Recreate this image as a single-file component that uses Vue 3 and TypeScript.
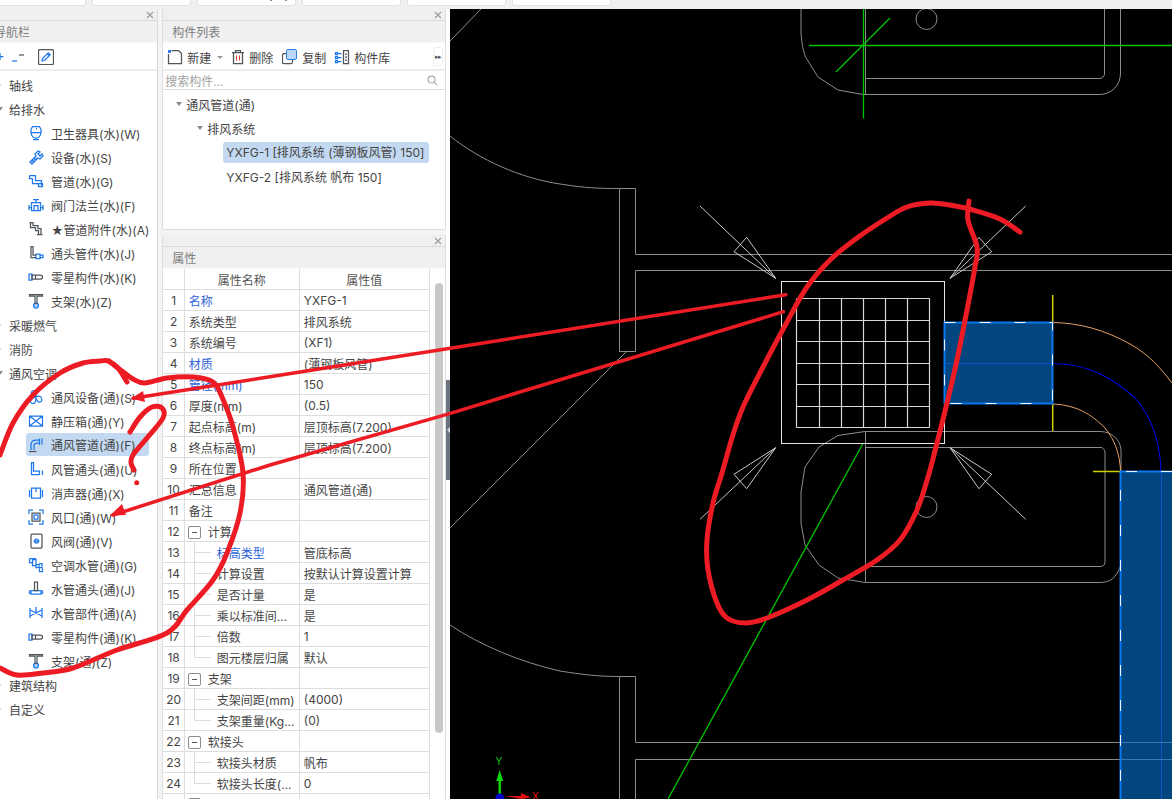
<script setup lang="ts">
type Pt = [number, number]

function smooth(p: Pt[]): string {
  let d = `M${p[0][0]} ${p[0][1]}`
  for (let i = 0; i < p.length - 1; i++) {
    const a = p[Math.max(i - 1, 0)]
    const b = p[i]
    const c = p[i + 1]
    const e = p[Math.min(i + 2, p.length - 1)]
    const c1x = b[0] + (c[0] - a[0]) / 6
    const c1y = b[1] + (c[1] - a[1]) / 6
    const c2x = c[0] - (e[0] - b[0]) / 6
    const c2y = c[1] - (e[1] - b[1]) / 6
    d += ` C${c1x.toFixed(1)} ${c1y.toFixed(1)} ${c2x.toFixed(1)} ${c2y.toFixed(1)} ${c[0]} ${c[1]}`
  }
  return d
}

const bigLoop = smooth([
  [1020, 232], [1000, 219], [973, 210], [950, 205], [930, 203], [907, 207], [887, 218], [857, 238],
  [830, 260], [807, 287], [787, 322], [763, 367], [743, 407], [732, 438], [722, 473], [713, 503],
  [707, 540], [708, 570], [717, 603], [727, 618], [745, 623], [767, 618], [807, 600], [843, 580],
  [877, 560], [900, 540], [917, 510], [928, 477], [936, 447], [947, 403], [957, 360], [967, 310],
  [975, 267], [977, 247], [968, 220], [969, 201]
])
const leftLoop = smooth([
  [0, 455], [13, 423], [33, 395], [60, 373], [83, 363], [100, 361], [108, 361], [118, 368], [127, 382]
])
const leftLoop2 = smooth([
  [109, 361], [122, 371], [133, 379], [145, 383], [167, 378], [193, 377], [213, 382], [222, 397],
  [233, 427], [243, 473], [240, 513], [227, 553], [213, 580], [187, 610], [167, 633], [117, 650],
  [73, 668], [43, 673], [17, 675], [0, 668]
])
const question = smooth([
  [130, 432], [140, 417], [152, 407], [162, 408], [163, 418], [147, 438], [133, 455], [131, 463], [134, 470]
])

const diffusers: { line: string; kite: string }[] = [
  { line: '700,206 775.7,278.3', kite: '775.7,278.3 734,251.7 746.7,237.3' },
  { line: '1025.7,206 950,278.3', kite: '950,278.3 991.7,251.7 979,237.3' },
  { line: '700,519.3 775.7,447.7', kite: '775.7,447.7 734,474.3 746.7,488.7' },
  { line: '1025.7,519.3 950,447.7', kite: '950,447.7 991.7,474.3 979,488.7' }
]
const gridX = [796.5, 819.5, 841.5, 863.5, 885.5, 907.5, 929.5]
const gridY = [298.5, 320.5, 341.5, 363.5, 384.5, 406.5, 427.5]

interface Node {
  label: string
  kind: 'open' | 'closed' | 'leaf'
  blue?: string
  dark?: string
  fill?: string
  active?: boolean
}

const nav: Node[] = [
  { label: '轴线', kind: 'closed' },
  { label: '给排水', kind: 'open' },
  { label: '卫生器具(水)(W)', kind: 'leaf', blue: 'M4.500 1.500h7l1.500 3v3H3v-3zM3 7.500c.5 3.500 2 5.500 5 5.500s4.500-2 5-5.500M5 14.500h6M8 3.500h1' },
  { label: '设备(水)(S)', kind: 'leaf', blue: 'M2 13l6-6-1-2 3-3 2 1-2 2 2 2 2-2 1 2-3 3-2-1-6 6zM4 11l2 2M6 9l2 2', fill: 'M2 13l6-6 2 2-6 6z' },
  { label: '管道(水)(G)', kind: 'leaf', blue: 'M1.500 2.500h6v5h6v5M1.500 2.500v3h3M4.500 5.500v5h6M10.500 10.500v3h4v-3h-4' },
  { label: '阀门法兰(水)(F)', kind: 'leaf', blue: 'M5 2.500h6M8 2.500v3M3.500 5.500h9v8h-9zM1 8v5M15 8v5M1 10.500h2.500M12.500 10.500H15M6 8.500h4v5H6z' },
  { label: '★管道附件(水)(A)', kind: 'leaf', dark: 'M1.500 1.500h4M2.500 1.500v5h5v3h3v4M5 1.500v3h5v3h3v6M9 13.500h5.500' },
  { label: '通头管件(水)(J)', kind: 'leaf', dark: 'M2.500 1.500h3M3 1.500v11h5M5 1.500v8.500h3', blue: 'M8 9h4v4.500H8zM12 10h3v2.500h-3z' },
  { label: '零星构件(水)(K)', kind: 'leaf', blue: 'M1 5h3v6H1z', dark: 'M4 6h8.500a2 2 0 0 1 0 4H4zM7.500 6v4' },
  { label: '支架(水)(Z)', kind: 'leaf', dark: 'M1.500 1.500h13v1.500H9v7H7V3H1.500z', blue: 'M10.500 12.500a2.500 2.500 0 1 1-5 0a2.500 2.500 0 1 1 5 0z', fill: 'M10.500 12.500a2.500 2.500 0 1 1-5 0a2.500 2.500 0 1 1 5 0z' },
  { label: '采暖燃气', kind: 'closed' },
  { label: '消防', kind: 'closed' },
  { label: '通风空调', kind: 'open' },
  { label: '通风设备(通)(S)', kind: 'leaf', blue: 'M8 8C5 7 3 5 3.500 3 4.500 1 7 1 8 3c1 1.500.500 3.500 0 5zM8 8c2-1 4.500-1 5.500 1 1 2 0 4-2 4S8 10.500 8 8zM8 8c-2 .5-4 1-5 3s0 3.500 2 3.500S8 11 8 8z' },
  { label: '静压箱(通)(Y)', kind: 'leaf', blue: 'M1.500 3h13v10h-13zM1.500 3L8 8l6.500-5M1.500 13L8 8l6.500 5' },
  { label: '通风管道(通)(F)', kind: 'leaf', active: true, blue: 'M3 13V8q0-5 5-5h3M6 13V9q0-3 3-3h2M11.500 1.500v6.500M14 1.500v6', dark: 'M1 14.500h7.500' },
  { label: '风管通头(通)(U)', kind: 'leaf', blue: 'M3 1.500h3M3.500 1.500v12h8M5.500 1.500v8.500h6M11.500 9.500v4.500M14.500 9.500v4.500' },
  { label: '消声器(通)(X)', kind: 'leaf', blue: 'M1.500 5v7M14.500 5v7M3.500 3h9v10h-9zM8 3v4' },
  { label: '风口(通)(W)', kind: 'leaf', blue: 'M1 5V1h4M11 1h4v4M15 11v4h-4M5 15H1v-4M6 6h4v4H6z', dark: 'M4 4h8v8H4z' },
  { label: '风阀(通)(V)', kind: 'leaf', dark: 'M4 1h9a1 1 0 0 1 1 1v12a1 1 0 0 1-1 1H4a1 1 0 0 1-1-1V2a1 1 0 0 1 1-1z', blue: 'M5.500 8h6M10.500 8a2 2 0 1 1-4 0a2 2 0 1 1 4 0z' },
  { label: '空调水管(通)(G)', kind: 'leaf', blue: 'M1.500 1.500v4h3v-3h3.500v5h3v3h3v-4h-3M1.500 1.500h6.500M4.500 5.500v3h3.500v2h3.500M11.500 11.500v3h3v-3' },
  { label: '水管通头(通)(J)', kind: 'leaf', dark: 'M6.500 1h3v8.500h-3z', blue: 'M3 9.500h10v3.500H3zM1.500 9.500v3.500M14.500 9.500v3.500' },
  { label: '水管部件(通)(A)', kind: 'leaf', blue: 'M2 3v10M14 3v10M2 5l12 6M2 11l12-6M8 2v6' },
  { label: '零星构件(通)(K)', kind: 'leaf', blue: 'M1 5h3v6H1z', dark: 'M4 6h8.500a2 2 0 0 1 0 4H4zM7.500 6v4' },
  { label: '支架(通)(Z)', kind: 'leaf', dark: 'M1.500 1.500h13v1.500H9v7H7V3H1.500z', blue: 'M10.500 12.500a2.500 2.500 0 1 1-5 0a2.500 2.500 0 1 1 5 0z', fill: 'M10.500 12.500a2.500 2.500 0 1 1-5 0a2.500 2.500 0 1 1 5 0z' },
  { label: '建筑结构', kind: 'closed' },
  { label: '自定义', kind: 'closed' }
]

interface Row {
  n: number
  name: string
  value?: string
  link?: boolean
  type?: 'group' | 'child' | 'last'
}

const rows: Row[] = [
  { n: 1, name: '名称', value: 'YXFG-1', link: true },
  { n: 2, name: '系统类型', value: '排风系统' },
  { n: 3, name: '系统编号', value: '(XF1)' },
  { n: 4, name: '材质', value: '(薄钢板风管)', link: true },
  { n: 5, name: '管径(mm)', value: '150', link: true },
  { n: 6, name: '厚度(mm)', value: '(0.5)' },
  { n: 7, name: '起点标高(m)', value: '层顶标高(7.200)' },
  { n: 8, name: '终点标高(m)', value: '层顶标高(7.200)' },
  { n: 9, name: '所在位置' },
  { n: 10, name: '汇总信息', value: '通风管道(通)' },
  { n: 11, name: '备注' },
  { n: 12, name: '计算', type: 'group' },
  { n: 13, name: '标高类型', value: '管底标高', link: true, type: 'child' },
  { n: 14, name: '计算设置', value: '按默认计算设置计算', type: 'child' },
  { n: 15, name: '是否计量', value: '是', type: 'child' },
  { n: 16, name: '乘以标准间...', value: '是', type: 'child' },
  { n: 17, name: '倍数', value: '1', type: 'child' },
  { n: 18, name: '图元楼层归属', value: '默认', type: 'last' },
  { n: 19, name: '支架', type: 'group' },
  { n: 20, name: '支架间距(mm)', value: '(4000)', type: 'child' },
  { n: 21, name: '支架重量(Kg...', value: '(0)', type: 'last' },
  { n: 22, name: '软接头', type: 'group' },
  { n: 23, name: '软接头材质', value: '帆布', type: 'child' },
  { n: 24, name: '软接头长度(...', value: '0', type: 'last' },
  { n: 25, name: '', type: 'group' }
]

const tabs = ['绘图', '通风管道', '通风管道(通)', '', '构件', '通风系统']
</script>

<template>
  <div class="app">
    <header class="topbar">
      <div v-for="(t, i) in tabs" :key="i" class="tab"><span>{{ t }}</span></div>
    </header>

    <main class="main">
      <aside class="panel nav-panel">
        <div class="strip"><svg class="close" viewBox="0 0 8 8"><path d="M1 1l6 6M7 1L1 7" /></svg></div>
        <div class="title">导航栏</div>
        <div class="toolbar nav-tools">
          <svg class="tool" viewBox="0 0 14 16"><path class="b" d="M7 4v7M3.500 7.500h7" /></svg>
          <svg class="tool" viewBox="0 0 14 16"><path class="b" d="M1 12h5" /><path class="d" d="M8 6h5" /></svg>
          <svg class="tool edit" viewBox="0 0 16 16">
            <rect class="d" x="0.500" y="0.500" width="15" height="15" rx="1.500" />
            <path class="b" d="M4 12l.7-2.700 5.500-5.500 2 2-5.500 5.500zM9.300 4.700l2 2" />
          </svg>
        </div>
        <div class="nav-tree">
          <div v-for="it in nav" :key="it.label" class="nav-row" :class="[it.kind, { active: it.active }]">
            <template v-if="it.kind === 'leaf'">
              <svg class="ico" viewBox="0 0 16 16">
                <path v-if="it.fill" class="f" :d="it.fill" />
                <path v-if="it.blue" class="b" :d="it.blue" />
                <path v-if="it.dark" class="d" :d="it.dark" />
              </svg>
            </template>
            <i v-else class="tri" :class="it.kind" />
            <span>{{ it.label }}</span>
          </div>
        </div>
      </aside>

      <section class="middle">
        <div class="panel list-panel">
          <div class="strip"><svg class="close" viewBox="0 0 8 8"><path d="M1 1l6 6M7 1L1 7" /></svg></div>
          <div class="title">构件列表</div>
          <div class="toolbar list-tools">
            <button class="btn new">
              <svg class="tool" viewBox="0 0 16 16">
                <path class="d" d="M4.500 1.500h7l3 3v10h-13V5" />
                <path class="blue-dots" d="M1 1h3v3H1z" />
              </svg>
              <span>新建</span>
              <i class="caret" />
            </button>
            <button class="btn del">
              <svg class="tool" viewBox="0 0 14 16">
                <path class="d" d="M1 3.500h12M4.500 3.500V1.500h5v2M2.500 3.500v11h9v-11" />
                <path class="r" d="M5.500 6.500v5M8.500 6.500v5" />
              </svg>
              <span>删除</span>
            </button>
            <button class="btn copy">
              <svg class="tool" viewBox="0 0 16 16">
                <rect class="d" x="0.500" y="4.500" width="10" height="10" rx="1.500" />
                <rect class="c" x="4.500" y="0.500" width="10" height="10" rx="1.500" />
              </svg>
              <span>复制</span>
            </button>
            <button class="btn lib">
              <svg class="tool" viewBox="0 0 16 16">
                <path class="b" d="M1.500 3.500h2v2h-2zM1.500 7.500h2v2h-2zM1.500 11.500h2v2h-2zM3.500 4.500h4M3.500 8.500h4M3.500 12.500h4" />
                <path class="d" d="M9.500 1.500h5v13h-5zM11 5h2M11 8h2M11 11h2" />
              </svg>
              <span>构件库</span>
            </button>
            <button class="more">▸▸</button>
          </div>
          <div class="search">
            <span>搜索构件...</span>
            <svg class="lens" viewBox="0 0 12 12"><circle cx="5" cy="5" r="3.800" /><path d="M8 8l3 3" /></svg>
          </div>
          <div class="list-tree">
            <div class="l-row l0"><i class="tri open" /><span>通风管道(通)</span></div>
            <div class="l-row l1"><i class="tri open" /><span>排风系统</span></div>
            <div class="l-row l2"><span class="sel">YXFG-1 [排风系统 (薄钢板风管) 150]</span></div>
            <div class="l-row l2"><span class="plain">YXFG-2 [排风系统 帆布 150]</span></div>
          </div>
        </div>

        <div class="panel prop-panel">
          <div class="strip"><svg class="close" viewBox="0 0 8 8"><path d="M1 1l6 6M7 1L1 7" /></svg></div>
          <div class="title">属性</div>
          <div class="prop-body">
            <table class="props">
              <colgroup><col class="c-n" /><col class="c-k" /><col class="c-v" /></colgroup>
              <thead>
                <tr><th></th><th>属性名称</th><th>属性值</th></tr>
              </thead>
              <tbody>
                <tr v-for="r in rows" :key="r.n">
                  <td class="num">{{ r.n }}</td>
                  <td class="key" :class="[r.type, { link: r.link }]">
                    <i v-if="r.type === 'group'" class="minus" />
                    <span>{{ r.name }}</span>
                  </td>
                  <td class="val">{{ r.value }}</td>
                </tr>
              </tbody>
            </table>
            <div class="scroll"><div class="thumb" /></div>
          </div>
        </div>
      </section>

      <div class="splitter"><div class="handle"><i /></div></div>

      <div class="canvas">
        <svg class="cad" width="722" height="790" viewBox="450 9 722 790">
          <!-- wall outlines -->
          <g class="gray">
            <path d="M450 41L481 9" />
            <path d="M450 136C480 160 520 178 560 184C585 188 600 188.500 619.500 188.500H635.500V254.500H1172" />
            <path d="M619.500 188.500V351.500H635.500V270.500H1172" />
            <path d="M450 528L627 351" />
            <path d="M801 9V33C802 45 803 50 805.500 57L818 77L838 90L863 94.500H1099C1112 94.500 1120.500 85 1120.500 73V9" />
            <path d="M866 78.500H1100C1102 78.500 1104.500 76 1104.500 74V9" />
            <path d="M865.500 9V94" />
            <path d="M450 625C480 645 520 662 560 671C585 675 600 676.500 619.500 676.500H635.500V742.500H1120" />
            <path d="M619.500 676.500V799M635.500 759.500V799M635.500 759.500H1120" />
            <path d="M1121 472V450C1120.500 440 1112 431.500 1100 431.500H865.500V582.500H1100C1110 582.500 1116 578 1120 567" />
            <path d="M865 431.500L838 435.500L819 447L805 467L801 492V523L805 545L819 565L838 578L865 582.500" />
            <path d="M866 447.500H1101C1103 447.500 1105 450 1105 452V562C1105 565 1103 566.500 1100 566.500H866" />
            <circle cx="926.500" cy="19" r="10.500" />
            <circle cx="926.500" cy="507" r="10.500" />
          </g>

          <!-- diffuser -->
          <rect class="square" x="781.500" y="281.500" width="163" height="162" />
          <g class="grid">
            <path v-for="x in gridX" :key="'v' + x" :d="`M${x} 298.500V427.500`" />
            <path v-for="y in gridY" :key="'h' + y" :d="`M796.500 ${y}H929.500`" />
          </g>
          <g v-for="(d, i) in diffusers" :key="i" class="arrow">
            <polyline :points="d.line" />
            <polygon :points="d.kite" />
          </g>

          <!-- green axes -->
          <g class="green">
            <path d="M863.500 9V118.500" />
            <path d="M809 45.500H1172" />
            <path d="M836 72L890 18" />
            <path d="M862.700 444L668 799" />
          </g>

          <!-- ducts -->
          <path class="orange" d="M1052.700 322.500C1080 323 1105 330 1130 344C1150 355 1162 370 1172 383" />
          <path class="orange" d="M1052.700 404C1080 405 1095 418 1105 428C1115 440 1120 455 1120.500 471" />
          <path class="navy" d="M1052.700 363.500C1090 363.500 1115 380 1135 398C1150 415 1160 440 1161 471" />
          <path class="yellow" d="M1052.700 295V322M1052.700 404V431M1093 471.500H1120" />

          <rect class="duct" x="944.500" y="322.500" width="108" height="81" />
          <path class="center" d="M944.500 363.500H1052.700" />
          <rect class="dash" x="944.500" y="322.500" width="108" height="81" />

          <rect class="duct" x="1120.500" y="471.500" width="60" height="340" />
          <path class="center" d="M1161.500 471.500V799" />
          <path class="cross" d="M1121 742.500H1172M1121 759.500H1172" />
          <path class="dash" d="M1172 471.500H1120.500V799" />

          <!-- axis gizmo -->
          <text class="ax-y" x="495.500" y="765">Y</text>
          <path class="ax-g" d="M499.700 770l3.500 11h-2.300v14h-2.400v-14h-2.300z" />
          <path class="ax-r" d="M505 796h16v-3l10 4.500-10 1.500z" />
          <circle class="ax-b" cx="499.700" cy="798" r="4.500" />
          <text class="ax-x" x="532" y="800">X</text>
        </svg>
      </div>
    </main>

    <svg class="markup" width="1172" height="799">
      <path :d="bigLoop" />
      <path :d="leftLoop" />
      <path :d="leftLoop2" />
      <path :d="question" />
      <circle class="dot" cx="136.700" cy="482.700" r="2.500" />
      <path class="thin" d="M785.800 294.700L450.300 348.300L270 376.700L133 398.300" />
      <path class="thin" d="M783.400 311.700L450.300 413.300L270 465L113 515" />
      <polygon class="dot" points="131,398.500 143,391 145,402" />
      <polygon class="dot" points="110,515.500 122,504 126,515" />
    </svg>
  </div>
</template>

<style>
html, body {
  margin: 0;
  height: 799px;
  overflow: hidden;
  background: #f4f4f4;
}
</style>

<style scoped>
.app {
  position: relative;
  display: flex;
  flex-direction: column;
  width: 1172px;
  height: 799px;
  overflow: hidden;
  font-family: Inter, "Noto Sans CJK SC", sans-serif;
  font-size: 12px;
  color: #454545;
}

/* top strip */
.topbar {
  flex: 0 0 9px;
  display: flex;
  gap: 6px;
  margin-left: -13px;
  background: #f0f0f0;
  overflow: hidden;
}
.tab {
  flex: 0 0 99px;
  height: 6px;
  background: #fff;
  border: 1px solid #e2e2e2;
  border-top: 0;
  border-radius: 0 0 3px 3px;
  overflow: hidden;
  box-sizing: border-box;
}
.tab span {
  display: block;
  margin: -13px 0 0 22px;
  line-height: 16px;
  white-space: nowrap;
  color: #333;
}

/* main row */
.main {
  flex: 1;
  min-height: 0;
  display: flex;
}
.panel {
  display: flex;
  flex-direction: column;
  background: #fff;
  box-sizing: border-box;
}
.strip {
  flex: 0 0 11px;
  display: flex;
  align-items: center;
  justify-content: flex-end;
  padding-right: 3px;
  background: #f0f0f0;
  border-bottom: 1px solid #d8d8d8;
}
.close {
  width: 8px;
  height: 8px;
  fill: none;
  stroke: #9a9a9a;
  stroke-width: 1.100;
}
.title {
  flex: 0 0 21px;
  min-height: 0;
  line-height: 23px;
  padding-left: 9px;
  color: #7d7d7d;
  background: #f0f0f0;
  border-bottom: 1px solid #fafafa;
}
.toolbar {
  flex: 0 0 28px;
  display: flex;
  align-items: center;
  padding-top: 2px;
  background: #fff;
  box-sizing: border-box;
}

/* nav panel */
.nav-panel {
  flex: 0 0 173px;
  margin-left: -15px;
  border-right: 1px solid #d9d9d9;
}
.nav-tools {
  padding-left: 8px;
  border-bottom: 2px solid #ececec;
}
.nav-tree {
  flex: 1;
  padding-top: 2px;
}
.nav-row {
  display: flex;
  align-items: center;
  height: 24px;
  white-space: nowrap;
  box-sizing: border-box;
}
.nav-row.open,
.nav-row.closed {
  padding-left: 12px;
  gap: 6px;
}
.nav-row.leaf {
  margin-left: 41px;
  margin-right: 8px;
  padding-left: 2px;
  gap: 7px;
}
.nav-row.active {
  height: 23px;
  margin-bottom: 1px;
  border-radius: 3px;
  background: #c3d9f1;
}
.tri {
  flex: 0 0 6px;
  width: 0;
  height: 0;
  box-sizing: border-box;
  border-style: solid;
}
.tri.open {
  border-width: 4px 3px 0;
  border-color: #8b8b8b transparent transparent;
}
.tri.closed {
  flex-basis: 6px;
  width: 6px;
  border-width: 3px 0 3px 4px;
  border-color: transparent transparent transparent #a5a5a5;
  margin-left: 0;
}
.ico {
  flex: 0 0 16px;
  width: 16px;
  height: 16px;
  fill: none;
}
.b {
  fill: none;
  stroke: #1f78ea;
  stroke-width: 1.250;
}
.d {
  fill: none;
  stroke: #50555c;
  stroke-width: 1.250;
}
.f {
  fill: #a9cdf5;
  stroke: none;
}
.r {
  fill: none;
  stroke: #e04040;
  stroke-width: 1.100;
}
.c {
  fill: #bcd6f5;
  stroke: #2f7fe6;
  stroke-width: 1;
}
.blue-dots {
  fill: #2f7fe6;
}
.tool {
  flex: none;
  width: 16px;
  height: 16px;
}
.nav-tools .tool:nth-child(1) {
  width: 14px;
}
.nav-tools .tool:nth-child(2) {
  width: 14px;
  margin-left: 4px;
}
.nav-tools .edit {
  margin-left: 13px;
}

/* middle */
.middle {
  flex: 0 0 284px;
  margin-left: 4px;
  display: flex;
  flex-direction: column;
  gap: 5px;
  min-height: 0;
}
.list-panel {
  flex: 0 0 221px;
  border: 1px solid #dedede;
  border-top: 0;
}
.list-tools {
  position: relative;
  gap: 0;
  padding-left: 4px;
  border-bottom: 2px solid #ececec;
}
.btn {
  display: flex;
  align-items: center;
  gap: 4px;
  padding: 0;
  border: 0;
  background: none;
  font: inherit;
  color: inherit;
}
.new {
  width: 64px;
}
.del {
  width: 51px;
}
.del .tool {
  width: 14px;
}
.copy {
  width: 52px;
}
.caret {
  margin-left: 2px;
  width: 0;
  height: 0;
  border-style: solid;
  border-width: 3px 3px 0;
  border-color: #999 transparent transparent;
}
.more {
  position: absolute;
  right: 2px;
  top: 4px;
  width: 10px;
  height: 19px;
  padding: 0;
  border: 1px solid #ededed;
  border-radius: 3px;
  background: #fff;
  font-size: 7px;
  line-height: 17px;
  color: #555;
  letter-spacing: -1px;
  overflow: hidden;
}
.search {
  flex: 0 0 18px;
  display: flex;
  align-items: center;
  justify-content: space-between;
  padding: 0 7px 0 2px;
  color: #a3a3a3;
  border-bottom: 1px solid #dedede;
}
.lens {
  width: 11px;
  height: 11px;
  fill: none;
  stroke: #a8a8a8;
  stroke-width: 1.200;
}
.list-tree {
  flex: 1;
  padding-top: 2px;
}
.l-row {
  display: flex;
  align-items: center;
  height: 24px;
  gap: 4px;
  white-space: nowrap;
}
.l0 {
  padding-left: 13px;
}
.l1 {
  padding-left: 34px;
}
.l2 {
  padding-left: 60px;
}
.sel {
  display: block;
  width: 206px;
  margin-right: 10px;
  padding-left: 3px;
  line-height: 21px;
  border-radius: 3px;
  background: #c3d9f1;
  box-sizing: border-box;
}
.plain {
  padding-left: 3px;
}

/* properties */
.prop-panel {
  flex: 1;
  min-height: 0;
  border-right: 1px solid #dedede;
  border-left: 1px solid #dedede;
}
.prop-body {
  flex: 1;
  min-height: 0;
  display: flex;
  overflow: hidden;
}
.props {
  flex: 0 0 266px;
  width: 266px;
  margin-top: -1px;
  table-layout: fixed;
  border-collapse: collapse;
  align-self: flex-start;
}
.c-n {
  width: 21px;
}
.c-k {
  width: 115px;
}
.c-v {
  width: 130px;
}
.props th,
.props td {
  height: 20px;
  padding: 0;
  border: 1px solid #dddddd;
  border-left-color: #dddddd;
  font-weight: 400;
  box-sizing: content-box;
  white-space: nowrap;
  overflow: hidden;
}
.props th:first-child,
.props td:first-child {
  border-left: 0;
}
.props th {
  text-align: center;
  color: #555;
}
.num {
  text-align: center;
}
.key {
  position: relative;
  padding-left: 4px !important;
  box-sizing: border-box;
}
.key.link span {
  color: #2c62d8;
}
.key.child,
.key.last {
  padding-left: 32px !important;
}
.key.child::before,
.key.last::before {
  content: "";
  position: absolute;
  left: 9px;
  top: 0;
  bottom: 0;
  border-left: 1px solid #dcdcdc;
}
.key.last::before {
  bottom: 50%;
}
.key.child::after,
.key.last::after {
  content: "";
  position: absolute;
  left: 9px;
  top: 50%;
  width: 17px;
  border-top: 1px solid #dcdcdc;
}
.key.group {
  padding-left: 3px !important;
}
.minus {
  position: relative;
  display: inline-block;
  width: 11px;
  height: 11px;
  margin-right: 7px;
  vertical-align: -2px;
  border: 1px solid #8c8c8c;
  border-radius: 2px;
  background: #fff;
}
.minus::after {
  content: "";
  position: absolute;
  left: 3px;
  top: 5px;
  width: 5px;
  border-top: 1px solid #555;
}
.val {
  padding-left: 4px !important;
}
.scroll {
  flex: 1;
  position: relative;
  border-top: 0;
}
.thumb {
  position: absolute;
  left: 5px;
  top: 14px;
  width: 8px;
  height: 450px;
  border-radius: 4px;
  background: #c8c8c8;
}

/* splitter */
.splitter {
  flex: 0 0 4px;
  display: flex;
  flex-direction: column;
  justify-content: flex-start;
  background: #fff;
}
.handle {
  display: flex;
  align-items: center;
  justify-content: center;
  margin-top: 371px;
  height: 100px;
  background: #6b7580;
}
.handle i {
  width: 0;
  height: 0;
  border-style: solid;
  border-width: 3px 3px 3px 0;
  border-color: transparent #d8dbde transparent transparent;
}

/* canvas */
.canvas {
  flex: 1;
  min-width: 0;
  background: #000;
  overflow: hidden;
}
.cad {
  display: block;
  fill: none;
}
.gray path,
.gray circle {
  fill: none;
  stroke: #8c8c8c;
  stroke-width: 1;
}
.square {
  fill: none;
  stroke: #e6e6e6;
  stroke-width: 1;
}
.grid path {
  fill: none;
  stroke: #d8d8d8;
  stroke-width: 1.200;
}
.arrow polyline,
.arrow polygon {
  fill: none;
  stroke: #dcdcdc;
  stroke-width: 0.900;
}
.green path {
  fill: none;
  stroke: #00c400;
  stroke-width: 1.300;
}
.orange {
  fill: none;
  stroke: #e3a066;
  stroke-width: 1;
}
.navy {
  fill: none;
  stroke: #0000e6;
  stroke-width: 1.100;
}
.yellow {
  fill: none;
  stroke: #d0d000;
  stroke-width: 1.500;
}
.duct {
  fill: #03467f;
  stroke: #0a78f0;
  stroke-width: 2;
}
.center {
  fill: none;
  stroke: #0b55c8;
  stroke-width: 1;
}
.cross {
  fill: none;
  stroke: #3f79b3;
  stroke-width: 1;
}
.dash {
  fill: none;
  stroke: #eef4fb;
  stroke-width: 1;
  stroke-dasharray: 11 24;
}
.ax-y {
  fill: #17c217;
  stroke: none;
  font-size: 10px;
}
.ax-x {
  fill: #e21010;
  stroke: none;
  font-size: 10px;
}
.ax-g {
  fill: #0bd70b;
  stroke: none;
}
.ax-r {
  fill: #e81010;
  stroke: none;
}
.ax-b {
  fill: #0000c8;
  stroke: none;
}

/* hand-drawn red markup, lying over everything */
.markup {
  position: absolute;
  left: 0;
  top: 0;
  pointer-events: none;
}
.markup path {
  fill: none;
  stroke: #ed1c24;
  stroke-width: 5;
  stroke-linecap: round;
  stroke-linejoin: round;
}
.markup path.thin {
  stroke-width: 3.500;
}
.markup .dot {
  fill: #ed1c24;
  stroke: none;
}
</style>
